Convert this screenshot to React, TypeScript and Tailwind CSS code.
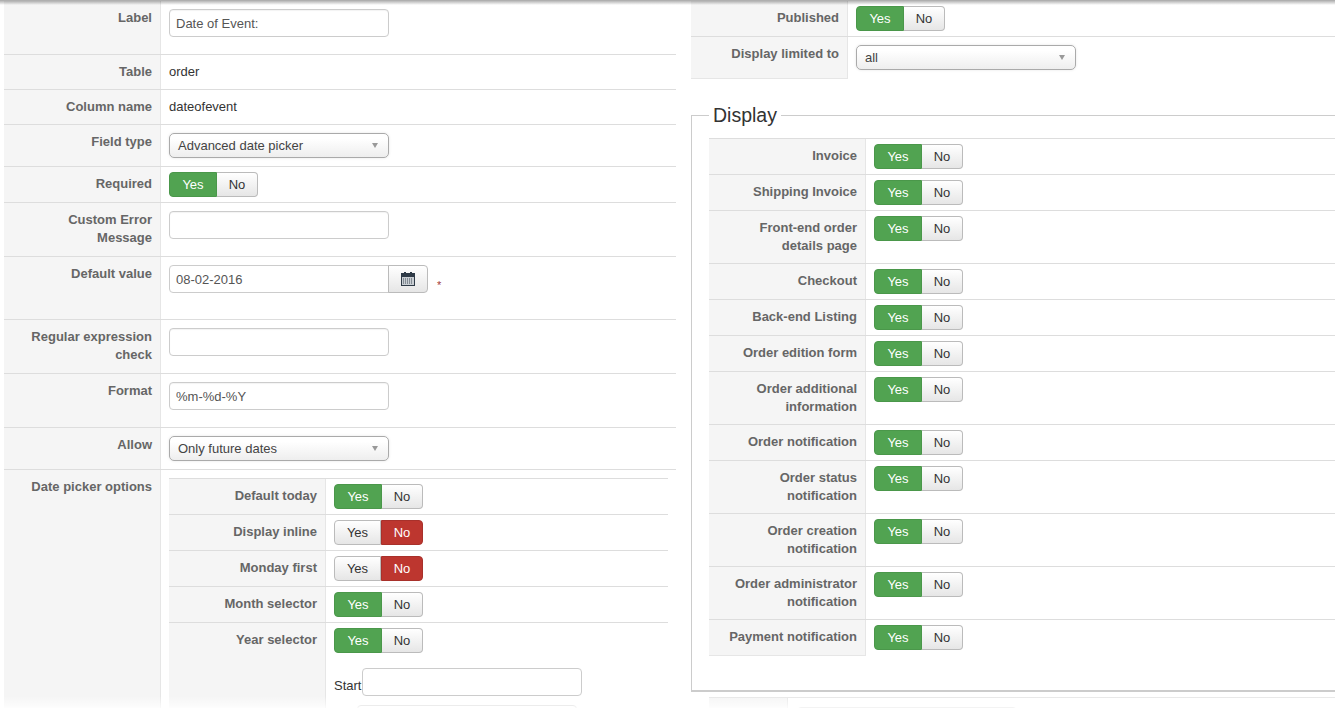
import type { ReactNode } from "react";

function Toggle({ on = true }: { on?: boolean }) {
  return (
    <div className="flex h-[25px] w-[89px] text-[13px] leading-[18px]">
      <div
        className={
          on
            ? "flex w-[48px] items-center justify-center rounded-l-[4px] border border-[#4a974a] bg-[#51a351] text-white"
            : "flex w-[47px] items-center justify-center rounded-l-[4px] border border-[#bbbbbb] bg-gradient-to-b from-white to-[#e6e6e6] text-[#333333]"
        }
      >
        Yes
      </div>
      <div
        className={
          on
            ? "flex w-[41px] items-center justify-center rounded-r-[4px] border border-l-0 border-[#bbbbbb] bg-gradient-to-b from-white to-[#e6e6e6] text-[#333333]"
            : "flex w-[42px] items-center justify-center rounded-r-[4px] border border-[#a8312b] bg-[#bd362f] text-white"
        }
      >
        No
      </div>
    </div>
  );
}

function TextInput({ value = "" }: { value?: string }) {
  return (
    <input
      readOnly
      value={value}
      className="mb-[9px] block h-[28px] w-[220px] rounded-[4px] border border-[#cccccc] bg-white px-[6px] text-[13px] text-[#555555] shadow-[inset_0_1px_1px_rgba(0,0,0,0.05)]"
    />
  );
}

function Select({ value }: { value: string }) {
  return (
    <div className="flex h-[25px] w-[220px] items-center justify-between rounded-[5px] border border-[#aaaaaa] bg-gradient-to-b from-white from-[20%] to-[#eeeeee] pl-[8px] pr-[10px] text-[13px] text-[#444444] shadow-[0_0_3px_rgba(0,0,0,0.1)]">
      <span>{value}</span>
      <span className="h-0 w-0 border-x-[3.5px] border-t-[5px] border-x-transparent border-t-[#999999]" />
    </div>
  );
}

function CalendarIcon() {
  return (
    <svg width="14" height="14" viewBox="0 0 14 14">
      <rect x="0.5" y="1.5" width="13" height="12" fill="#c9ced3" stroke="#2f3b47" />
      <rect x="1" y="2" width="12" height="3" fill="#2f3b47" />
      <rect x="3" y="0" width="2" height="3" fill="#2f3b47" />
      <rect x="9" y="0" width="2" height="3" fill="#2f3b47" />
      <path d="M2 7h10M2 9h10M2 11h10" stroke="#3f4a55" strokeWidth="1" strokeDasharray="1 1" />
    </svg>
  );
}

function Row({
  label,
  children,
  last = false,
  pad = "py-[8px]",
}: {
  label: ReactNode;
  children: ReactNode;
  last?: boolean;
  pad?: string;
}) {
  return (
    <div className={last ? "flex" : "flex border-b border-[#dddddd]"}>
      <div
        className={
          last
            ? "w-[157px] shrink-0 border-r border-b border-[#e6e6e6] bg-[#f5f5f5] py-[8px] pr-[8px] text-right text-[13px] leading-[18px] font-bold text-[#666666]"
            : "w-[157px] shrink-0 border-r border-[#e6e6e6] bg-[#f5f5f5] py-[8px] pr-[8px] text-right text-[13px] leading-[18px] font-bold text-[#666666]"
        }
      >
        {label}
      </div>
      <div className={`min-w-0 flex-1 pl-[8px] text-[13px] leading-[18px] text-[#333333] ${pad}`}>
        {children}
      </div>
    </div>
  );
}

const displayRows: { label: ReactNode }[] = [
  { label: "Invoice" },
  { label: "Shipping Invoice" },
  { label: <>Front-end order<br />details page</> },
  { label: "Checkout" },
  { label: "Back-end Listing" },
  { label: "Order edition form" },
  { label: <>Order additional<br />information</> },
  { label: "Order notification" },
  { label: <>Order status<br />notification</> },
  { label: <>Order creation<br />notification</> },
  { label: <>Order administrator<br />notification</> },
];

export default function App() {
  return (
    <div className="relative h-[708px] w-[1335px] overflow-hidden bg-white font-['Liberation_Sans',Arial,sans-serif]">
      <div className="flex items-start">
        <div className="ml-[4px] w-[672px] shrink-0 pt-[1px]">
          <Row label="Label">
            <TextInput value="Date of Event:" />
          </Row>
          <Row label="Table">order</Row>
          <Row label="Column name">dateofevent</Row>
          <Row label="Field type">
            <Select value="Advanced date picker" />
          </Row>
          <Row label="Required" pad="py-[5px]">
            <Toggle />
          </Row>
          <Row label={<>Custom Error<br />Message</>}>
            <TextInput />
          </Row>
          <Row label="Default value" pad="pt-[8px] pb-[26px]">
            <div className="flex items-start">
              <input
                readOnly
                value="08-02-2016"
                className="h-[28px] w-[220px] rounded-l-[4px] border border-[#cccccc] px-[6px] text-[13px] text-[#555555]"
              />
              <div className="-ml-[1px] flex h-[28px] w-[40px] items-center justify-center rounded-r-[4px] border border-[#bbbbbb] bg-gradient-to-b from-white to-[#e6e6e6]">
                <CalendarIcon />
              </div>
              <span className="ml-[9px] mt-[13px] text-[11px] leading-[14px] text-[#a33a3a]">*</span>
            </div>
          </Row>
          <Row label={<>Regular expression<br />check</>}>
            <TextInput />
          </Row>
          <Row label="Format">
            <TextInput value="%m-%d-%Y" />
          </Row>
          <Row label="Allow">
            <Select value="Only future dates" />
          </Row>
          <Row label="Date picker options" pad="pt-[8px] pr-[8px]">
            <div className="border-t border-[#dddddd]">
              <Row label="Default today" pad="py-[5px]">
                <Toggle />
              </Row>
              <Row label="Display inline" pad="py-[5px]">
                <Toggle on={false} />
              </Row>
              <Row label="Monday first" pad="py-[5px]">
                <Toggle on={false} />
              </Row>
              <Row label="Month selector" pad="py-[5px]">
                <Toggle />
              </Row>
              <Row label="Year selector" pad="pt-[5px] pb-[40px]">
                <Toggle />
                <div className="mt-[15px] flex items-end">
                  <span className="w-[28px] pb-[1px]">Start</span>
                  <input readOnly className="h-[28px] w-[220px] rounded-[4px] border border-[#cccccc]" />
                </div>
                <div className="mt-[9px] flex items-end">
                  <span className="w-[23px]" />
                  <input readOnly className="h-[28px] w-[220px] rounded-[4px] border border-[#cccccc]" />
                </div>
              </Row>
            </div>
          </Row>
        </div>

        <div className="ml-[15px] w-[700px] shrink-0 pt-[1px]">
          <Row label="Published" pad="py-[5px]">
            <Toggle />
          </Row>
          <Row label="Display limited to" last pad="pt-[8px] pb-[9px]">
            <Select value="all" />
          </Row>

          <fieldset className="mt-[25px] w-[700px] border border-b-2 border-[#cccccc] pb-[34px] pl-[17px]">
            <legend className="px-[4px] text-[19.5px] leading-[23px] text-[#333333]">Display</legend>
            <div className="mt-[11px] border-t border-[#dddddd]">
              {displayRows.map((row, i) => (
                <Row key={i} label={row.label} pad="py-[5px]">
                  <Toggle />
                </Row>
              ))}
              <Row label="Payment notification" pad="pt-[5px] pb-[6px]" last>
                <Toggle />
              </Row>
            </div>
          </fieldset>

          <div className="ml-[18px] mt-[5px] flex border-t border-[#e6e6e6]">
            <div className="h-[20px] w-[79px] border-r border-[#e6e6e6] bg-[#f5f5f5]" />
            <div className="pl-[9px] pt-[9px]">
              <div className="h-[28px] w-[220px] rounded-[4px] border border-[#cccccc]" />
            </div>
          </div>
        </div>
      </div>

      <div className="absolute inset-x-0 top-0 h-[5px] bg-gradient-to-b from-black/35 to-transparent" />
      <div className="absolute inset-x-0 bottom-0 h-[12px] bg-gradient-to-b from-transparent to-white/80" />
    </div>
  );
}
